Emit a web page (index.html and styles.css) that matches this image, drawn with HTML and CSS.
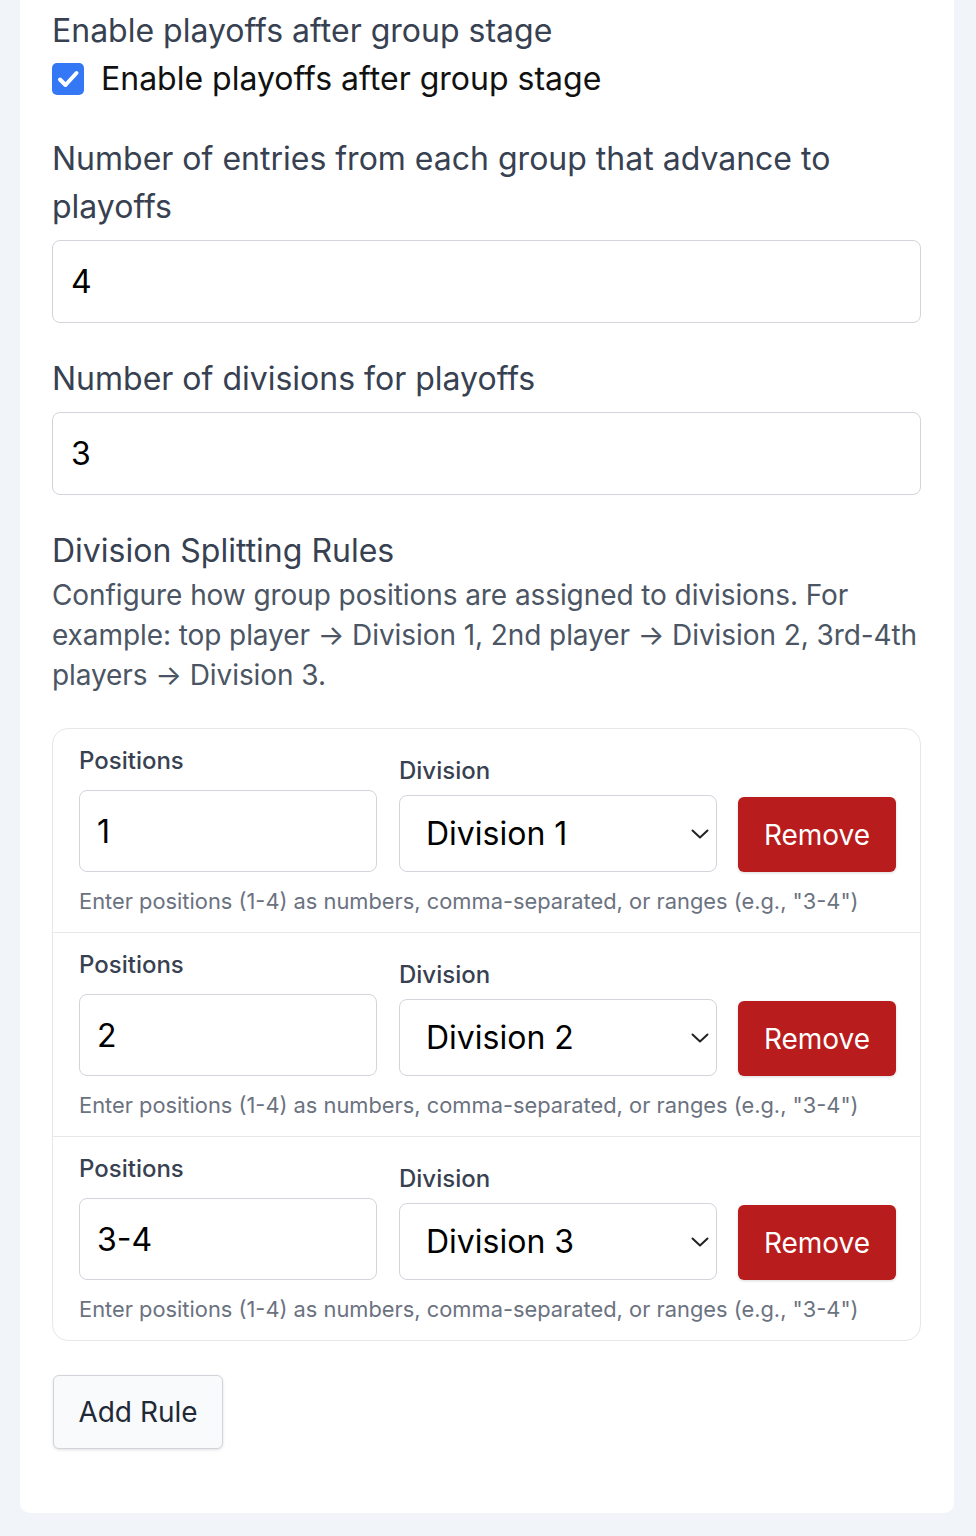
FILE: index.html
```html
<!DOCTYPE html>
<html lang="en">
<head>
<meta charset="utf-8">
<title>Playoff settings</title>
<link rel="stylesheet" href="styles.css">
</head>
<body>
<div class="card">
  <div class="field">
    <div class="label">Enable playoffs after group stage</div>
    <label class="check-row">
      <span class="checkbox"><svg viewBox="0 0 32 32" width="32" height="32"><path d="M8 16.5l5.5 5.5L24.5 10" fill="none" stroke="#fff" stroke-width="4" stroke-linecap="round" stroke-linejoin="round"/></svg></span>
      <span class="check-text">Enable playoffs after group stage</span>
    </label>
  </div>

  <div class="field">
    <label class="label lbl-input">Number of entries from each group that advance to playoffs</label>
    <input class="text-input" type="text" value="4">
  </div>

  <div class="field">
    <label class="label lbl-input">Number of divisions for playoffs</label>
    <input class="text-input" type="text" value="3">
  </div>

  <div class="field rules-section">
    <div class="label">Division Splitting Rules</div>
    <p class="desc">Configure how group positions are assigned to divisions. For example: top player → Division 1, 2nd player → Division 2, 3rd-4th players → Division 3.</p>

    <div class="rules">
      <div class="rule">
        <div class="rule-main">
          <div class="col-pos">
            <div class="rule-label pos-label">Positions</div>
            <input class="pos-input" type="text" value="1">
          </div>
          <div class="col-div">
            <div class="rule-label div-label">Division</div>
            <div class="select-wrap">
              <div class="select">Division 1</div>
              <svg class="chev" viewBox="0 0 18 10" width="18" height="10"><path d="M1.5 1.5l7.5 7 7.5-7" fill="none" stroke="#222" stroke-width="2" stroke-linecap="round" stroke-linejoin="round"/></svg>
            </div>
          </div>
          <button class="btn-remove">Remove</button>
        </div>
        <div class="help">Enter positions (1-4) as numbers, comma-separated, or ranges (e.g., "3-4")</div>
      </div>

      <div class="rule">
        <div class="rule-main">
          <div class="col-pos">
            <div class="rule-label pos-label">Positions</div>
            <input class="pos-input" type="text" value="2">
          </div>
          <div class="col-div">
            <div class="rule-label div-label">Division</div>
            <div class="select-wrap">
              <div class="select">Division 2</div>
              <svg class="chev" viewBox="0 0 18 10" width="18" height="10"><path d="M1.5 1.5l7.5 7 7.5-7" fill="none" stroke="#222" stroke-width="2" stroke-linecap="round" stroke-linejoin="round"/></svg>
            </div>
          </div>
          <button class="btn-remove">Remove</button>
        </div>
        <div class="help">Enter positions (1-4) as numbers, comma-separated, or ranges (e.g., "3-4")</div>
      </div>

      <div class="rule">
        <div class="rule-main">
          <div class="col-pos">
            <div class="rule-label pos-label">Positions</div>
            <input class="pos-input" type="text" value="3-4">
          </div>
          <div class="col-div">
            <div class="rule-label div-label">Division</div>
            <div class="select-wrap">
              <div class="select">Division 3</div>
              <svg class="chev" viewBox="0 0 18 10" width="18" height="10"><path d="M1.5 1.5l7.5 7 7.5-7" fill="none" stroke="#222" stroke-width="2" stroke-linecap="round" stroke-linejoin="round"/></svg>
            </div>
          </div>
          <button class="btn-remove">Remove</button>
        </div>
        <div class="help">Enter positions (1-4) as numbers, comma-separated, or ranges (e.g., "3-4")</div>
      </div>
    </div>

    <button class="btn-add">Add Rule</button>
  </div>
</div>
</body>
</html>
```

FILE: styles.css
```css
* { box-sizing: border-box; }

html, body {
  margin: 0;
  padding: 0;
}

body {
  background: #f1f5f9;
  font-family: Inter, "Noto Sans", sans-serif;
  min-height: 1536px;
  padding-bottom: 22px;
}

.card {
  margin: 0 22px 0 20px;
  background: #ffffff;
  border-radius: 0 0 10px 10px;
  padding: 7px 33px 64px 32px;
}

.field + .field {
  margin-top: 32px;
}

.label {
  display: block;
  font-size: 32px;
  line-height: 48px;
  color: #374151;
}

.lbl-input {
  margin-bottom: 9px;
}

.check-row {
  display: flex;
  align-items: center;
  gap: 17px;
  height: 48px;
}

.checkbox {
  width: 32px;
  height: 32px;
  border-radius: 5px;
  background: #3478f6;
  display: flex;
  align-items: center;
  justify-content: center;
}

.checkbox svg { display: block; }

.check-text {
  font-size: 32px;
  line-height: 48px;
  color: #111111;
}

.text-input {
  display: block;
  width: 100%;
  height: 83px;
  border: 1px solid #d1d5db;
  border-radius: 8px;
  padding: 0 18px;
  font-family: Inter, "Noto Sans", sans-serif;
  font-size: 32px;
  color: #000;
  background: #fff;
  outline: none;
}

.desc {
  margin: 0;
  font-size: 28px;
  line-height: 40px;
  letter-spacing: -0.08px;
  color: #4b5563;
}

.rules {
  margin-top: 33px;
  border: 1px solid #e5e7eb;
  border-radius: 16px;
}

.rule {
  padding: 14px 24px 15px 26px;
}

.rule + .rule {
  border-top: 1px solid #e5e7eb;
}

.rule-main {
  display: flex;
  align-items: flex-end;
}

.col-pos {
  width: 298px;
}

.col-div {
  width: 318px;
  margin-left: 22px;
}

.rule-label {
  font-size: 24px;
  line-height: 36px;
  font-weight: 500;
  color: #374151;
}

.pos-label {
  margin-bottom: 11px;
}

.div-label {
  margin-bottom: 6px;
}

.pos-input {
  display: block;
  width: 100%;
  height: 82px;
  border: 1px solid #d1d5db;
  border-radius: 8px;
  padding: 0 17px;
  font-family: Inter, "Noto Sans", sans-serif;
  font-size: 32px;
  color: #000;
  background: #fff;
  outline: none;
}

.select-wrap {
  position: relative;
}

.select {
  height: 77px;
  border: 1px solid #d1d5db;
  border-radius: 8px;
  padding: 0 26px;
  display: flex;
  align-items: center;
  font-size: 32px;
  color: #000;
  background: #fff;
}

.chev {
  position: absolute;
  right: 8px;
  top: 34px;
}

.btn-remove {
  margin-left: 21px;
  width: 158px;
  height: 75px;
  border: none;
  border-radius: 6px;
  background: #b91c1c;
  color: #fff;
  font-family: Inter, "Noto Sans", sans-serif;
  font-size: 28px;
  box-shadow: 0 1px 3px rgba(0,0,0,0.15);
}

.help {
  margin-top: 13px;
  font-size: 21.85px;
  line-height: 32px;
  color: #6b7280;
}

.btn-add {
  display: block;
  margin-top: 34px;
  margin-left: 1px;
  width: 170px;
  height: 74px;
  border: 1px solid #d1d5db;
  border-radius: 6px;
  background: #f9fafb;
  color: #1f2937;
  font-family: Inter, "Noto Sans", sans-serif;
  font-size: 28px;
  box-shadow: 0 1px 3px rgba(0,0,0,0.12);
}
```
